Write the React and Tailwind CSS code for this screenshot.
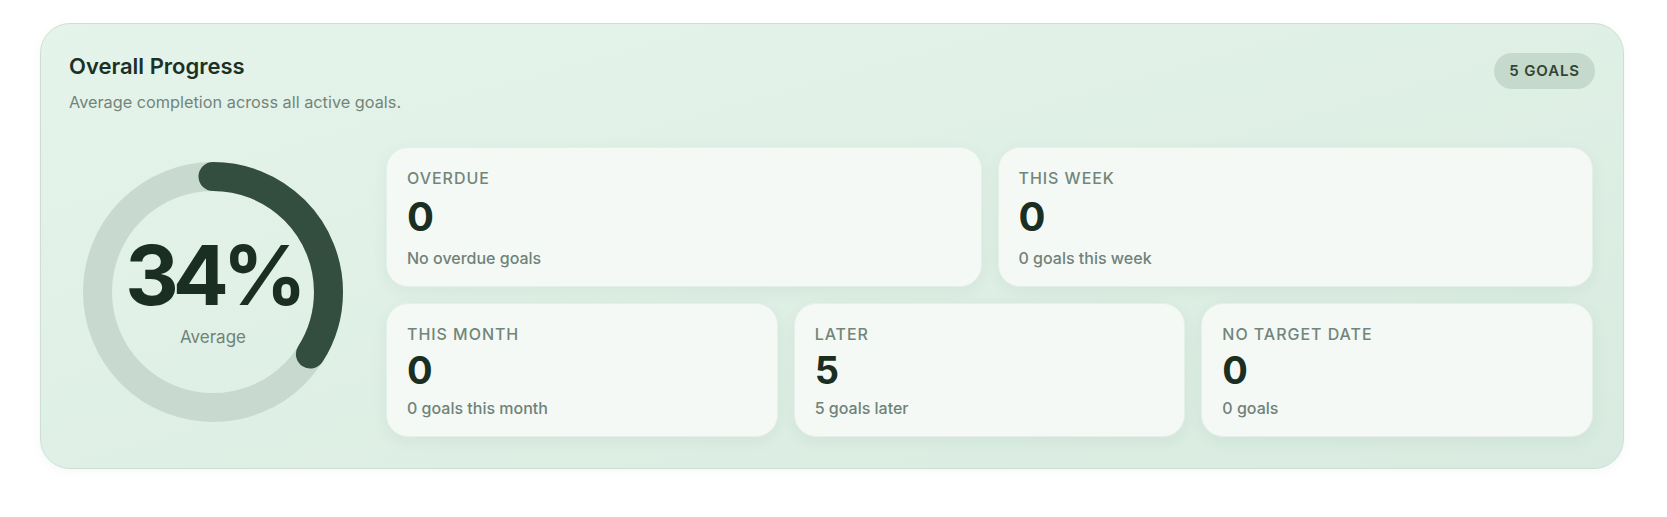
const stats = [
  { label: 'Overdue', value: 0, note: 'No overdue goals' },
  { label: 'This week', value: 0, note: '0 goals this week' },
];

const laterStats = [
  { label: 'This month', value: 0, note: '0 goals this month' },
  { label: 'Later', value: 5, note: '5 goals later' },
  { label: 'No target date', value: 0, note: '0 goals' },
];

function ProgressRing({ percent }) {
  const size = 260;
  const stroke = 29;
  const r = (size - stroke) / 2;
  const circ = 2 * Math.PI * r;
  const dash = (percent / 100) * circ;

  return (
    <div className="relative w-[260px] h-[260px]">
      <svg width={size} height={size} viewBox={`0 0 ${size} ${size}`} className="-rotate-90">
        <circle cx={size / 2} cy={size / 2} r={r} fill="none" stroke="#c8dacf" strokeWidth={stroke} />
        <circle
          cx={size / 2}
          cy={size / 2}
          r={r}
          fill="none"
          stroke="#334e3f"
          strokeWidth={stroke}
          strokeLinecap="round"
          strokeDasharray={`${dash} ${circ}`}
        />
      </svg>
      <div className="absolute inset-0 flex flex-col items-center justify-center pb-[2px]">
        <span className="text-[83px] leading-none font-bold tracking-[-0.075em] text-[#1b2e22]">{percent}%</span>
        <span className="mt-[8px] text-[17px] leading-6 text-[#708379]">Average</span>
      </div>
    </div>
  );
}

function StatCard({ label, value, note, big }) {
  return (
    <div
      className={
        'rounded-[22px] bg-[#f4f9f6] border border-[#e6f0ea] shadow-[0_4px_16px_rgba(40,90,60,0.06)] pl-5 pr-5 pt-5 ' +
        (big ? 'h-[140px]' : 'h-[134px]')
      }
    >
      <div className="text-[16px] leading-5 font-medium uppercase tracking-[0.06em] text-[#72857a]">{label}</div>
      <div
        className={
          'font-bold leading-none text-[#1b2e22] ' + (big ? 'text-[40px] mt-[9px]' : 'text-[38px] mt-[7px]')
        }
      >
        {value}
      </div>
      <div className={'text-[16px] leading-5 font-medium text-[#708279] ' + (big ? 'mt-[11px]' : 'mt-[9px]')}>
        {note}
      </div>
    </div>
  );
}

export default function App() {
  return (
    <div className="min-h-screen bg-white pt-[23px] pl-[40px]" style={{ fontFamily: 'Inter, "Noto Sans", sans-serif' }}>
      <section className="w-[1584px] rounded-[30px] border border-[#cbe0d3] bg-linear-to-br from-[#e5f4eb] to-[#d9ebe0] pt-[28px] pl-[28px] pr-[28px] pb-[31px] shadow-[0_2px_10px_rgba(40,90,60,0.05)]">
        <div className="flex items-start justify-between">
          <div>
            <h2 className="text-[22px] leading-7 font-semibold text-[#1c3126]">Overall Progress</h2>
            <p className="mt-[10px] text-[16.3px] leading-6 text-[#728579]">Average completion across all active goals.</p>
          </div>
          <span className="mt-[1px] flex items-center h-9 px-[15px] rounded-full bg-[#c6d9cd] text-[15px] font-semibold tracking-[0.06em] text-[#2e4537]">
            5 GOALS
          </span>
        </div>

        <div className="mt-[33px] flex items-center">
          <div className="w-[317px] shrink-0 pl-[14px]">
            <ProgressRing percent={34} />
          </div>
          <div className="flex-1 mr-[2px] flex flex-col gap-4">
            <div className="grid grid-cols-2 gap-4">
              {stats.map((s) => (
                <StatCard key={s.label} {...s} big />
              ))}
            </div>
            <div className="grid grid-cols-3 gap-4">
              {laterStats.map((s) => (
                <StatCard key={s.label} {...s} />
              ))}
            </div>
          </div>
        </div>
      </section>
    </div>
  );
}
